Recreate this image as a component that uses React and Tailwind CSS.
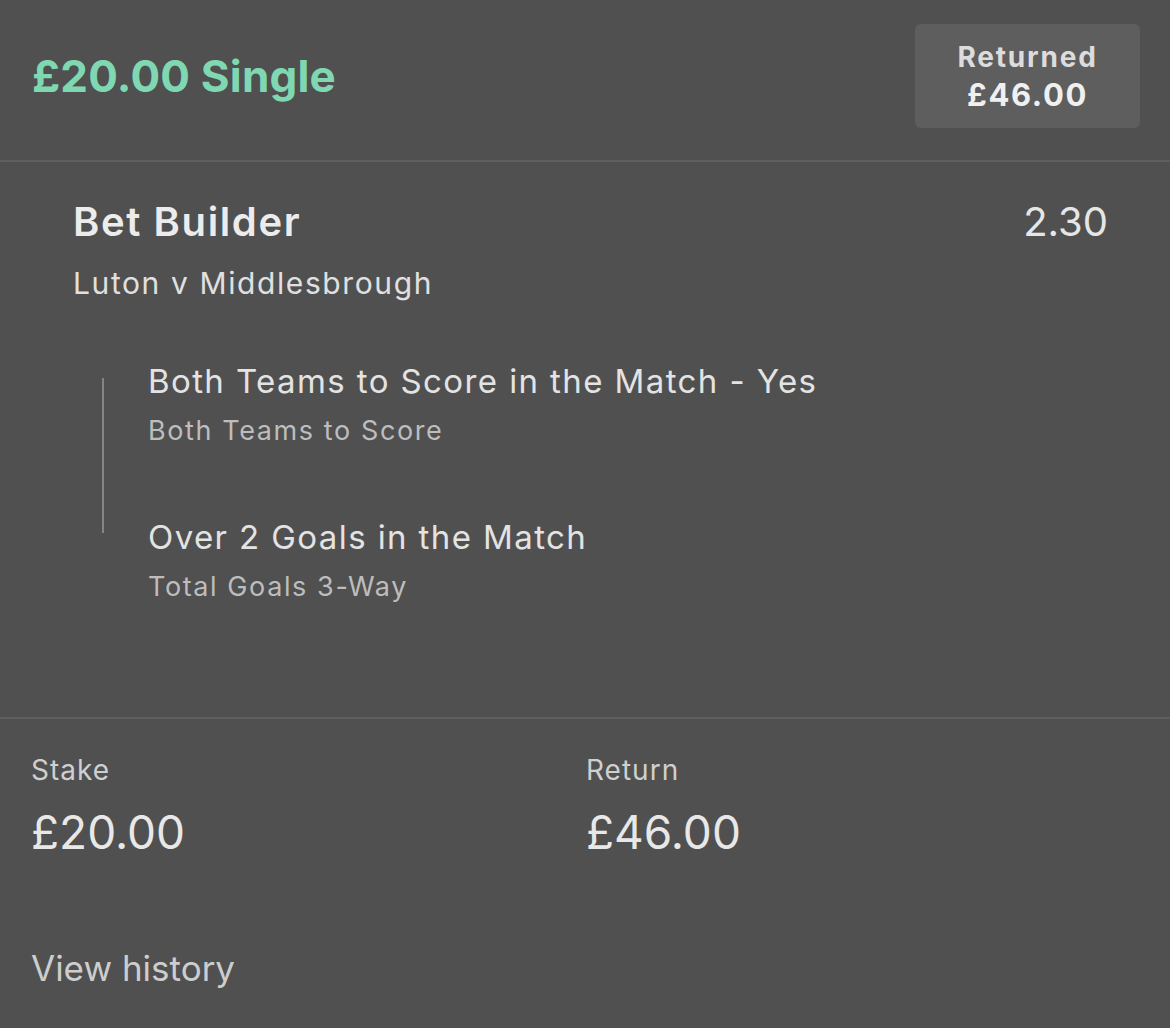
import React from 'react';

const legs = [
  { title: 'Both Teams to Score in the Match - Yes', market: 'Both Teams to Score' },
  { title: 'Over 2 Goals in the Match', market: 'Total Goals 3-Way' },
];

export default function App() {
  return (
    <div className="min-h-[1028px] w-[1170px] bg-[#505050] font-['Inter',sans-serif] text-[#e6e6e6]">
      {/* header */}
      <div className="flex items-center justify-between h-[162px] pb-[8px] pl-[32px] pr-[30px] border-b-[2px] border-[#5f5f5f]">
        <h1 className="text-[44px] font-bold text-[#7fd8b2] tracking-[0.2px]">£20.00 Single</h1>
        <div className="flex flex-col items-center justify-center w-[225px] h-[104px] rounded-[6px] bg-[#5e5e5e] leading-[38px]">
          <span className="text-[28px] font-bold text-[#dcdcdc] tracking-[1.8px]">Returned</span>
          <span className="text-[31px] font-bold text-[#f0f0f0] tracking-[1.6px]">£46.00</span>
        </div>
      </div>

      {/* selection */}
      <div className="h-[557px] pl-[73px] pr-[62px] pt-[36px] border-b-[2px] border-[#5f5f5f]">
        <div className="flex justify-between items-center leading-[48px]">
          <span className="text-[40px] font-semibold text-[#ececec] tracking-[1.6px]">Bet Builder</span>
          <span className="text-[40px] text-[#e6e6e6]">2.30</span>
        </div>
        <div className="mt-[17px] text-[30px] leading-[40px] text-[#e0e0e0] tracking-[1.6px]">Luton v Middlesbrough</div>

        <div className="flex mt-[56px] relative">
          <div className="absolute left-[29px] top-[19px] w-[2px] h-[155px] bg-[#858585]" />
          <div className="pl-[75px] flex flex-col gap-[68px]">
            {legs.map((leg) => (
              <div key={leg.title}>
                <div className="text-[33px] leading-[44px] text-[#e3e3e3] tracking-[1.4px]">{leg.title}</div>
                <div className="mt-[12px] text-[27px] leading-[32px] text-[#bdbdbd] tracking-[1.6px]">{leg.market}</div>
              </div>
            ))}
          </div>
        </div>
      </div>

      {/* stake / return */}
      <div className="grid grid-cols-[555px_1fr] pl-[31px] pt-[34px]">
        <div>
          <div className="text-[28px] leading-[34px] text-[#cfcfcf] tracking-[1px]">Stake</div>
          <div className="mt-[18px] text-[46px] leading-[54px] text-[#e8e8e8]">£20.00</div>
        </div>
        <div>
          <div className="text-[28px] leading-[34px] text-[#cfcfcf] tracking-[1px]">Return</div>
          <div className="mt-[18px] text-[46px] leading-[54px] text-[#e8e8e8]">£46.00</div>
        </div>
      </div>
      <div className="pl-[31px] mt-[88px] text-[35px] leading-[42px] text-[#cdcdcd]">View history</div>
    </div>
  );
}
